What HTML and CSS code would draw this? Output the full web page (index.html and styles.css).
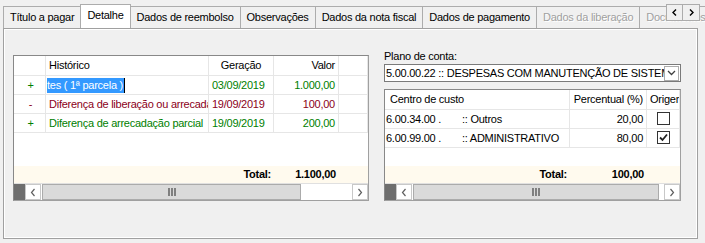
FILE: index.html
```html
<!DOCTYPE html>
<html lang="pt-BR">
<head>
    <meta charset="UTF-8">
    <title>Detalhe</title>
    <link rel="stylesheet" href="styles.css">
</head>
<body>
    <div class="tabbar">
        <div class="tab">Título a pagar</div>
        <div class="tab active">Detalhe</div>
        <div class="tab">Dados de reembolso</div>
        <div class="tab">Observações</div>
        <div class="tab">Dados da nota fiscal</div>
        <div class="tab">Dados de pagamento</div>
        <div class="tab disabled">Dados da liberação</div>
        <div class="tab disabled">Documentos</div>
        <div class="tab-scroll">
            <div class="tab-arrow"><svg width="7" height="7" viewBox="0 0 7 7"><path d="M5 0.5 L2 3.5 L5 6.5" fill="none" stroke="#000" stroke-width="1.4"/></svg></div>
            <div class="tab-arrow"><svg width="7" height="7" viewBox="0 0 7 7"><path d="M2 0.5 L5 3.5 L2 6.5" fill="none" stroke="#000" stroke-width="1.4"/></svg></div>
        </div>
    </div>

    <div class="page">
        <div class="grid lgrid">
            <div class="row head">
                <div class="cell"></div>
                <div class="cell">Histórico</div>
                <div class="cell center">Geração</div>
                <div class="cell right">Valor</div>
                <div class="cell"></div>
            </div>
            <div class="row green">
                <div class="cell center">+</div>
                <div class="cell editor"><span class="sel">tes ( 1ª parcela )</span><span class="caret"></span></div>
                <div class="cell">03/09/2019</div>
                <div class="cell right">1.000,00</div>
                <div class="cell"></div>
            </div>
            <div class="row red">
                <div class="cell center">-</div>
                <div class="cell">Diferença de liberação ou arrecadação</div>
                <div class="cell">19/09/2019</div>
                <div class="cell right">100,00</div>
                <div class="cell"></div>
            </div>
            <div class="row green">
                <div class="cell center">+</div>
                <div class="cell">Diferença de arrecadação parcial</div>
                <div class="cell">19/09/2019</div>
                <div class="cell right">200,00</div>
                <div class="cell"></div>
            </div>
            <div class="filler"></div>
            <div class="row total">
                <div class="cell"></div>
                <div class="cell"></div>
                <div class="cell right">Total:</div>
                <div class="cell right">1.100,00</div>
                <div class="cell"></div>
            </div>
            <div class="hscroll">
                <div class="sb-corner"></div>
                <div class="sb-btn"><svg width="6" height="9" viewBox="0 0 6 9"><path d="M4.5 1 L1.5 4.5 L4.5 8" fill="none" stroke="#606060" stroke-width="1.2"/></svg></div>
                <div class="sb-thumb lthumb"><svg width="8" height="8" viewBox="0 0 8 8"><path d="M1 0V8M4 0V8M7 0V8" stroke="#505050" stroke-width="1.3"/></svg></div>
                <div class="sb-track"></div>
                <div class="sb-btn"><svg width="6" height="9" viewBox="0 0 6 9"><path d="M1.5 1 L4.5 4.5 L1.5 8" fill="none" stroke="#606060" stroke-width="1.2"/></svg></div>
            </div>
        </div>

        <div class="side">
            <div class="label">Plano de conta:</div>
            <div class="combo">
                <div class="combo-text">5.00.00.22 :: DESPESAS COM MANUTENÇÃO DE SISTEMAS</div>
                <div class="combo-btn"><svg width="9" height="6" viewBox="0 0 9 6"><path d="M1 1 L4.5 4.5 L8 1" fill="none" stroke="#404040" stroke-width="1.3"/></svg></div>
            </div>
            <div class="grid rgrid">
                <div class="row head">
                    <div class="cell">Centro de custo</div>
                    <div class="cell right">Percentual (%)</div>
                    <div class="cell clip">Origem</div>
                </div>
                <div class="row">
                    <div class="cell"><span class="code">6.00.34.00 .</span>:: Outros</div>
                    <div class="cell right">20,00</div>
                    <div class="cell center"><span class="check"></span></div>
                </div>
                <div class="row">
                    <div class="cell"><span class="code">6.00.99.00 .</span>:: ADMINISTRATIVO</div>
                    <div class="cell right">80,00</div>
                    <div class="cell center"><span class="check"><svg width="11" height="11" viewBox="0 0 11 11"><path d="M2 5.5 L4.5 8 L9 2.5" fill="none" stroke="#222" stroke-width="1.8"/></svg></span></div>
                </div>
                <div class="filler"></div>
                <div class="row total">
                    <div class="cell right">Total:</div>
                    <div class="cell right">100,00</div>
                    <div class="cell"></div>
                </div>
                <div class="hscroll">
                    <div class="sb-corner"></div>
                    <div class="sb-btn"><svg width="6" height="9" viewBox="0 0 6 9"><path d="M4.5 1 L1.5 4.5 L4.5 8" fill="none" stroke="#606060" stroke-width="1.2"/></svg></div>
                    <div class="sb-thumb rthumb"><svg width="8" height="8" viewBox="0 0 8 8"><path d="M1 0V8M4 0V8M7 0V8" stroke="#505050" stroke-width="1.3"/></svg></div>
                    <div class="sb-track"></div>
                    <div class="sb-btn"><svg width="6" height="9" viewBox="0 0 6 9"><path d="M1.5 1 L4.5 4.5 L1.5 8" fill="none" stroke="#606060" stroke-width="1.2"/></svg></div>
                </div>
            </div>
        </div>
    </div>
</body>
</html>
```

FILE: styles.css
```css
body {
    margin: 0;
    background-color: #f0f0f0;
    font-family: 'Liberation Sans', Arial, sans-serif;
    font-size: 11px;
    letter-spacing: -0.25px;
    color: #000;
    width: 705px;
    height: 243px;
    overflow: hidden;
}
.tabbar {
    position: relative;
    display: flex;
    align-items: flex-end;
    height: 28px;
    padding-left: 3px;
    overflow: hidden;
    white-space: nowrap;
}
.tab {
    box-sizing: border-box;
    height: 22px;
    line-height: 20px;
    padding: 0 6px;
    border: 1px solid #acacac;
    border-bottom: none;
    border-left: none;
    background-color: #f0f0f0;
    flex-shrink: 0;
}
.tab:first-child {
    border-left: 1px solid #acacac;
}
.tab.active {
    height: 25px;
    margin-bottom: -1px;
    line-height: 21px;
    background-color: #fff;
    border-left: 1px solid #acacac;
    margin-left: -1px;
    position: relative;
    z-index: 2;
}
.tab.disabled {
    color: #a0a0a0;
    text-shadow: 1px 1px 0 #fff;
}
.tab-scroll {
    position: absolute;
    top: 4px;
    left: 666px;
    display: flex;
    z-index: 3;
}
.tab-arrow {
    box-sizing: border-box;
    width: 17px;
    height: 17px;
    border: 1px solid #acacac;
    background-color: #f0f0f0;
    display: flex;
    align-items: center;
    justify-content: center;
}
.tab-arrow + .tab-arrow {
    border-left: none;
}
.page {
    box-sizing: border-box;
    margin-left: 3px;
    width: 695px;
    height: 211px;
    border: 1px solid #a0a0a0;
    box-shadow: inset 1px 1px 0 #fff, inset -1px -1px 0 #fff;
    background-color: #f0f0f0;
    display: flex;
    align-items: flex-start;
    padding-left: 9px;
    gap: 15px;
    position: relative;
    z-index: 1;
}
.grid {
    box-sizing: border-box;
    background-color: #fff;
    border: 1px solid #a0a0a0;
    border-top-color: #888;
    border-left-color: #888;
    display: flex;
    flex-direction: column;
    overflow: hidden;
}
.lgrid {
    margin-top: 26px;
    width: 356px;
    height: 146px;
}
.row {
    display: grid;
    height: 19px;
    flex-shrink: 0;
}
.lgrid .row {
    grid-template-columns: 32px 163px 65px 65px 1fr;
}
.rgrid .row {
    grid-template-columns: 185px 77px 1fr;
}
.cell {
    box-sizing: border-box;
    border-right: 1px solid #e6e6e6;
    border-bottom: 1px solid #e6e6e6;
    padding: 0 3px;
    line-height: 18px;
    white-space: nowrap;
    overflow: hidden;
}
.lgrid .row .cell:first-child {
    padding-left: 5px;
}
.row.head {
    height: 20px;
}
.head .cell {
    line-height: 19px;
    padding-left: 3px;
}
.center {
    text-align: center;
}
.right {
    text-align: right;
}
.clip {
    padding: 0 0 0 2px;
}
.green {
    color: #008000;
}
.red {
    color: #8b0020;
}
.editor {
    padding-left: 1px;
    display: flex;
    align-items: center;
}
.sel {
    background-color: #3399ff;
    color: #fff;
    line-height: 15px;
    padding-right: 1px;
}
.caret {
    width: 1px;
    height: 15px;
    background-color: #000;
}
.filler {
    flex: 1;
}
.row.total {
    height: 17px;
    background-color: #fffaee;
    font-weight: bold;
}
.total .cell {
    border: none;
    line-height: 17px;
}
.hscroll {
    display: flex;
    height: 17px;
    flex-shrink: 0;
    border-top: 1px solid #e0e0e0;
    box-sizing: border-box;
}
.sb-corner {
    width: 11px;
    background-color: #6e6e6e;
}
.sb-btn {
    box-sizing: border-box;
    width: 16px;
    border: 1px solid #c8c8c8;
    background-color: #fff;
    display: flex;
    align-items: center;
    justify-content: center;
}
.sb-thumb {
    box-sizing: border-box;
    margin-left: 1px;
    background-color: #dadada;
    border: 1px solid #ababab;
    display: flex;
    align-items: center;
    justify-content: center;
}
.lthumb {
    width: 259px;
}
.rthumb {
    width: 246px;
}
.sb-track {
    flex: 1;
    background-color: #fff;
}
.side {
    display: flex;
    flex-direction: column;
    width: 297px;
    padding-top: 21px;
}
.label {
    height: 14px;
    line-height: 13px;
}
.combo {
    box-sizing: border-box;
    height: 18px;
    border: 1px solid #7a7a7a;
    background-color: #fff;
    display: flex;
    align-items: center;
}
.combo-text {
    flex: 1;
    overflow: hidden;
    white-space: nowrap;
    padding-left: 1px;
}
.combo-btn {
    box-sizing: border-box;
    width: 15px;
    height: 15px;
    margin-right: 1px;
    border: 1px solid #acacac;
    background-color: #fff;
    display: flex;
    align-items: center;
    justify-content: center;
}
.rgrid {
    margin-top: 7px;
    height: 112px;
}
.rgrid .row .cell:first-child {
    padding-left: 1px;
}
.rgrid .head .cell:first-child {
    padding-left: 5px;
}
.code {
    display: inline-block;
    width: 76px;
}
.check {
    display: inline-flex;
    box-sizing: border-box;
    width: 13px;
    height: 13px;
    margin-top: 2px;
    border: 1px solid #333;
    background-color: #fff;
    vertical-align: top;
    align-items: center;
    justify-content: center;
}
```
